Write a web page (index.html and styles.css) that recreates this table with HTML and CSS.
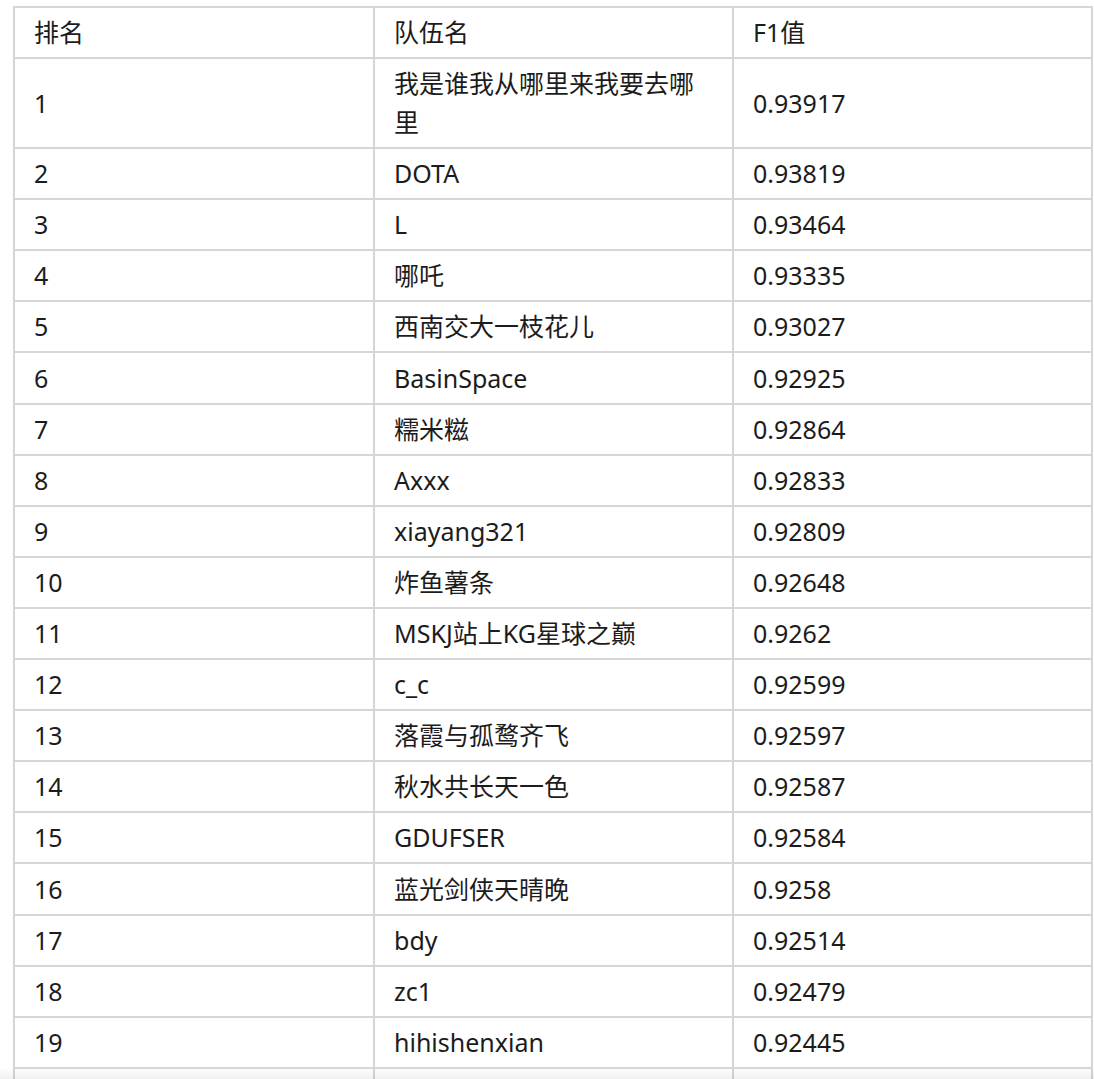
FILE: index.html
```html
<!DOCTYPE html>
<html lang="zh-CN">
<head>
<meta charset="utf-8">
<title>排名</title>
<link rel="stylesheet" href="styles.css">
</head>
<body>
<table class="rank">
  <colgroup><col class="c1"><col class="c2"><col class="c3"></colgroup>
  <thead>
    <tr><th>排名</th><th>队伍名</th><th>F1值</th></tr>
  </thead>
  <tbody>
    <tr><td>1</td><td>我是谁我从哪里来我要去哪里</td><td>0.93917</td></tr>
    <tr><td>2</td><td>DOTA</td><td>0.93819</td></tr>
    <tr><td>3</td><td>L</td><td>0.93464</td></tr>
    <tr><td>4</td><td>哪吒</td><td>0.93335</td></tr>
    <tr><td>5</td><td>西南交大一枝花儿</td><td>0.93027</td></tr>
    <tr><td>6</td><td>BasinSpace</td><td>0.92925</td></tr>
    <tr><td>7</td><td>糯米糍</td><td>0.92864</td></tr>
    <tr><td>8</td><td>Axxx</td><td>0.92833</td></tr>
    <tr><td>9</td><td>xiayang321</td><td>0.92809</td></tr>
    <tr><td>10</td><td>炸鱼薯条</td><td>0.92648</td></tr>
    <tr><td>11</td><td>MSKJ站上KG星球之巅</td><td>0.9262</td></tr>
    <tr><td>12</td><td>c_c</td><td>0.92599</td></tr>
    <tr><td>13</td><td>落霞与孤鹜齐飞</td><td>0.92597</td></tr>
    <tr><td>14</td><td>秋水共长天一色</td><td>0.92587</td></tr>
    <tr><td>15</td><td>GDUFSER</td><td>0.92584</td></tr>
    <tr><td>16</td><td>蓝光剑侠天晴晚</td><td>0.9258</td></tr>
    <tr><td>17</td><td>bdy</td><td>0.92514</td></tr>
    <tr><td>18</td><td>zc1</td><td>0.92479</td></tr>
    <tr><td>19</td><td>hihishenxian</td><td>0.92445</td></tr>
    <tr><td>&nbsp;</td><td>&nbsp;</td><td>&nbsp;</td></tr>
  </tbody>
</table>
<div class="fade"></div>
</body>
</html>
```
FILE: styles.css
```css
html, body {
  margin: 0;
  padding: 0;
  background: #ffffff;
}
body {
  font-family: "Segoe UI", "Noto Sans", "Noto Sans CJK SC", sans-serif;
  font-size: 25px;
  color: #1c1c1c;
  overflow: hidden;
}
.rank {
  border-collapse: collapse;
  table-layout: fixed;
  width: 1078px;
  margin: 6px 0 0 13px;
}
.rank th,
.rank td {
  border: 2px solid #d6d6d6;
  padding: 5.1px 20px 5.1px 19px;
  line-height: 38.9px;
  text-align: left;
  font-weight: normal;
  vertical-align: middle;
  word-break: break-all;
}
.rank .c1 { width: 360px; }
.rank .c2 { width: 359px; }
.rank .c3 { width: 359px; }
.fade {
  position: fixed;
  left: 0;
  right: 0;
  bottom: 0;
  height: 10px;
  background: linear-gradient(to bottom, rgba(0,0,0,0.01), rgba(0,0,0,0.06));
  pointer-events: none;
}
```
